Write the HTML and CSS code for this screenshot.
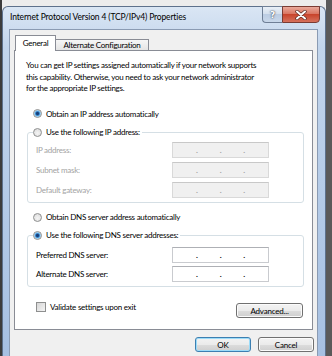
FILE: index.html
```html
<!DOCTYPE html>
<html lang="en">
<head>
    <meta charset="UTF-8">
    <title>Internet Protocol Version 4 (TCP/IPv4) Properties</title>
    <link rel="stylesheet" href="styles.css">
</head>
<body>
    <div class="window">
        <div class="titlebar">
            <span class="title">Internet Protocol Version 4 (TCP/IPv4) Properties</span>
            <div class="caption">
                <span class="cap-btn help">?</span>
                <span class="cap-btn close">
                    <svg width="12" height="10" viewBox="0 0 12 10">
                        <path d="M2 1.5 L10 8.5 M10 1.5 L2 8.5" stroke="#5a2a24" stroke-width="3.4" stroke-linecap="round"/>
                        <path d="M2 1.5 L10 8.5 M10 1.5 L2 8.5" stroke="#fff" stroke-width="2" stroke-linecap="round"/>
                    </svg>
                </span>
            </div>
        </div>

        <div class="client">
            <div class="tabs">
                <div class="tab active">General</div>
                <div class="tab alt">Alternate Configuration</div>
            </div>

            <div class="panel">
                <p class="intro">
                    You can get IP settings assigned automatically if your network supports<br>
                    this capability. Otherwise, you need to ask your network administrator<br>
                    for the appropriate IP settings.
                </p>

                <div class="option first"><span class="radio checked"></span>Obtain an IP address automatically</div>

                <div class="group">
                    <div class="legend"><span class="radio"></span>Use the following IP address:</div>
                    <div class="fields disabled">
                        <span>IP address:</span>
                        <div class="ip"><span>.</span><span>.</span><span>.</span></div>
                        <span>Subnet mask:</span>
                        <div class="ip"><span>.</span><span>.</span><span>.</span></div>
                        <span>Default gateway:</span>
                        <div class="ip"><span>.</span><span>.</span><span>.</span></div>
                    </div>
                </div>

                <div class="option dns"><span class="radio"></span>Obtain DNS server address automatically</div>

                <div class="group dns-group">
                    <div class="legend"><span class="radio checked"></span>Use the following DNS server addresses:</div>
                    <div class="fields">
                        <span>Preferred DNS server:</span>
                        <div class="ip"><span>.</span><span>.</span><span>.</span></div>
                        <span>Alternate DNS server:</span>
                        <div class="ip"><span>.</span><span>.</span><span>.</span></div>
                    </div>
                </div>

                <div class="panel-foot">
                    <div class="check"><span class="box"></span>Validate settings upon exit</div>
                    <button class="btn advanced">Advanced...</button>
                </div>
            </div>

            <div class="actions">
                <button class="btn default">OK</button>
                <button class="btn">Cancel</button>
            </div>
        </div>
    </div>
</body>
</html>
```

FILE: styles.css
```css
* {
    box-sizing: border-box;
}
html, body {
    margin: 0;
    height: 356px;
    overflow: hidden;
}
body {
    font-family: Lato, "Liberation Sans", sans-serif;
    font-size: 8px;
    letter-spacing: -0.25px;
    color: #000;
    background: linear-gradient(to right, #3c3c3c 0 2px, #ececec 2px 326px, #5a5a5a 326px);
}
.window {
    height: 350px;
    margin: 6px 6px 0 2px;
    padding: 0 7px 0 6px;
    border: 1px solid #5d718c;
    border-bottom: none;
    border-radius: 6px 6px 0 0;
    background: linear-gradient(#dae6f4, #c2d5ec 40px, #a6c0e2);
}
.titlebar {
    display: flex;
    align-items: flex-start;
    height: 22px;
}
.title {
    padding: 5px 0 0 1px;
    font-size: 8.5px;
    letter-spacing: -0.15px;
}
.caption {
    display: flex;
    margin: -1px -2px 0 auto;
}
.cap-btn {
    display: flex;
    align-items: center;
    justify-content: center;
    height: 17px;
    border: 1px solid #6f7f96;
}
.help {
    width: 20px;
    border-radius: 0 0 0 4px;
    border-right: none;
    background: linear-gradient(#e9eff7, #d2deec 50%, #bccde3 50%, #c9d8ea);
    color: #fff;
    font-family: "DejaVu Sans", sans-serif;
    font-weight: bold;
    font-size: 9px;
    letter-spacing: 0;
    text-shadow: 0 0 2px #3e4b5e, 0 0 1px #3e4b5e;
}
.close {
    width: 38px;
    border-color: #7a3b33;
    border-radius: 0 0 4px 0;
    background: linear-gradient(#e9a99b, #d8705c 50%, #c8442c 50%, #d6715c);
}
.client {
    height: 327px;
    padding: 5px 4px 0 4px;
    background: #f0f0f0;
    border: 1px solid #8a9bb3;
    border-bottom: none;
}
.tabs {
    display: flex;
    align-items: flex-end;
    height: 15px;
    padding-left: 1px;
}
.tab {
    display: flex;
    align-items: center;
    justify-content: center;
    height: 11px;
    border: 1px solid #898c95;
    border-bottom: none;
    background: linear-gradient(#f6f6f6, #e4e4e4);
}
.tab.active {
    position: relative;
    z-index: 1;
    width: 41px;
    height: 16px;
    margin-bottom: -1px;
    padding-bottom: 2px;
    background: #fff;
}
.tab.alt {
    width: 94px;
    margin-left: -1px;
}
.panel {
    padding: 9px 8px 11px 11px;
    background: #fff;
    border: 1px solid #898c95;
}
.intro {
    margin: 0;
    line-height: 11.5px;
    white-space: nowrap;
}
.option {
    display: flex;
    align-items: center;
    gap: 4px;
    height: 14px;
    margin-left: 7px;
}
.option.first {
    margin-top: 12px;
}
.option.dns {
    margin-top: 7px;
}
.radio {
    flex: none;
    width: 9px;
    height: 9px;
    border-radius: 50%;
    border: 1px solid #8e8f8f;
    background: radial-gradient(circle at 50% 60%, #f4f4f4, #d9d9d9);
}
.radio.checked {
    background: radial-gradient(circle, #173f7a 0 1.2px, #2e7ac4 1.8px, #7fc3ee 2.8px, #e4eef7 3.6px);
}
.group {
    margin: 11.5px 0 0 1px;
    padding: 0 33px 4px 8px;
    border: 1px solid #d5dfe5;
    border-radius: 3px;
}
.group.dns-group {
    margin-top: 11px;
}
.legend {
    display: flex;
    align-items: center;
    gap: 4px;
    width: max-content;
    height: 14px;
    margin: -8px 0 0 -3px;
    padding-right: 2px;
    background: #fff;
}
.fields {
    display: grid;
    grid-template-columns: 136px 97px;
    grid-auto-rows: 16px;
    row-gap: 4px;
    align-items: center;
    margin-top: 3px;
}
.dns-group .fields {
    row-gap: 3px;
    margin-top: 5px;
}
.ip {
    display: flex;
    justify-content: center;
    gap: 22px;
    height: 16px;
    padding-top: 2px;
    background: #fff;
    border: 1px solid #c9cbcf;
    border-top-color: #aeb0b5;
    font-weight: bold;
}
.disabled {
    color: #a3a3a3;
}
.disabled .ip {
    background: #f0f0f0;
    border-color: #d9d9d9;
    border-top-color: #c8c8c8;
}
.panel-foot {
    display: flex;
    align-items: flex-start;
    height: 15px;
    margin-top: 16px;
    padding-left: 10px;
}
.check {
    display: flex;
    align-items: center;
    gap: 4px;
    height: 10px;
    margin-top: -1px;
}
.box {
    width: 10px;
    height: 10px;
    border: 1px solid #8e8f8f;
    background: linear-gradient(135deg, #d6d6d6, #f4f4f4);
}
.btn {
    height: 15px;
    padding: 0;
    font-family: inherit;
    font-size: 8px;
    letter-spacing: -0.2px;
    color: #000;
    border: 1px solid #707070;
    border-radius: 3px;
    background: linear-gradient(#f3f3f3, #ebebeb 50%, #dddddd 50%, #cfcfcf);
    box-shadow: inset 0 0 0 1px #fbfbfb;
}
.advanced {
    width: 67px;
    margin: 0 1px 0 auto;
}
.actions {
    display: flex;
    justify-content: flex-end;
    gap: 7px;
    margin: 7px -1px 0 0;
}
.actions .btn {
    width: 56px;
}
.btn.default {
    border-color: #3c7fb1;
    box-shadow: inset 0 0 0 1px #9cdcf9;
}
```
